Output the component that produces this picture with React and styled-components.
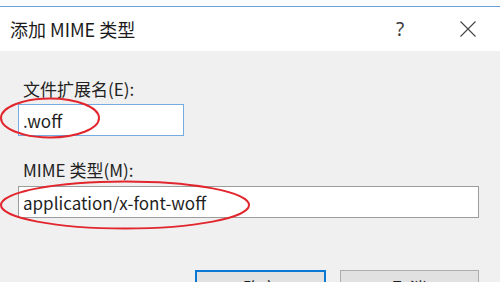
import styled, { createGlobalStyle } from "styled-components";

const GlobalStyle = createGlobalStyle`
    html, body {
        margin: 0;
        padding: 0;
        background: #f0f0f0;
    }

    body {
        font-family: "Noto Sans CJK SC", "Noto Sans", sans-serif;
        color: #1f1f1f;
    }
`;

const Dialog = styled.div`
    position: relative;
    width: 500px;
    height: 282px;
    overflow: hidden;
    background: #f0f0f0;
`;

const TopStrip = styled.div`
    height: 6px;
    background: #fbfcfd;
    border-bottom: 1px solid #6a9fd4;
`;

const TitleBar = styled.header`
    display: flex;
    align-items: center;
    height: 44px;
    padding-left: 10px;
    background: #ffffff;

    h1 {
        flex: 1;
        margin: 0;
        font-size: 18px;
        font-weight: 400;
        color: #1a1a1a;
    }
`;

const HelpButton = styled.span`
    width: 20px;
    margin-right: 50px;
    font-family: "Noto Sans", sans-serif;
    font-size: 19px;
    color: #3a3a3a;
    text-align: center;
`;

const CloseButton = styled.span`
    display: flex;
    margin-right: 24px;
`;

const Body = styled.main`
    padding: 28px 21px 0 18px;
`;

const Label = styled.label`
    display: block;
    margin: ${(p) => p.$top || 0}px 0 0 5px;
    font-size: 17px;
    line-height: 20px;
    color: #222;
`;

const TextBox = styled.input`
    display: block;
    box-sizing: border-box;
    width: ${(p) => p.$width}px;
    height: 32px;
    margin-top: ${(p) => p.$top}px;
    padding: 0 4px;
    background: #ffffff;
    border: 1px solid ${(p) => (p.$focused ? "#74abe3" : "#9c9c9c")};
    outline: none;
    font-family: "Noto Sans CJK SC", "Noto Sans", sans-serif;
    font-size: 17px;
    color: #1f1f1f;
`;

const ButtonRow = styled.div`
    display: flex;
    justify-content: flex-end;
    gap: 14px;
    margin-top: 52px;
`;

const Button = styled.button`
    box-sizing: border-box;
    width: ${(p) => p.$width}px;
    height: 32px;
    padding: 2px 0 0;
    background: #e1e1e1;
    border: ${(p) => (p.$primary ? "2px solid #0a78d4" : "1px solid #adadad")};
    font-family: "Noto Sans CJK SC", sans-serif;
    font-size: 17px;
    color: #1f1f1f;
`;

const Annotations = styled.svg`
    position: absolute;
    top: 0;
    left: 0;
    pointer-events: none;
`;

const App = () => {
    return (
        <Dialog>
            <GlobalStyle />
            <TopStrip />
            <TitleBar>
                <h1>添加 MIME 类型</h1>
                <HelpButton>?</HelpButton>
                <CloseButton>
                    <svg width="16" height="16" viewBox="0 0 16 16">
                        <path
                            d="M0.5 0.5 L15.5 15.5 M15.5 0.5 L0.5 15.5"
                            stroke="#444"
                            strokeWidth="1.1"
                            fill="none"
                        />
                    </svg>
                </CloseButton>
            </TitleBar>
            <Body>
                <Label>文件扩展名(E):</Label>
                <TextBox $width={166} $top={5} $focused readOnly value=".woff" />
                <Label $top={24}>MIME 类型(M):</Label>
                <TextBox $width={461} $top={6} readOnly value="application/x-font-woff" />
                <ButtonRow>
                    <Button $primary $width={131}>确定</Button>
                    <Button $width={139}>取消</Button>
                </ButtonRow>
            </Body>
            <Annotations width="500" height="282" viewBox="0 0 500 282">
                <ellipse cx="50" cy="118" rx="49" ry="19.5" fill="none" stroke="#e2262d" strokeWidth="2" />
                <ellipse cx="125" cy="205" rx="124" ry="23.5" fill="none" stroke="#e2262d" strokeWidth="2" />
            </Annotations>
        </Dialog>
    );
};

export default App;
